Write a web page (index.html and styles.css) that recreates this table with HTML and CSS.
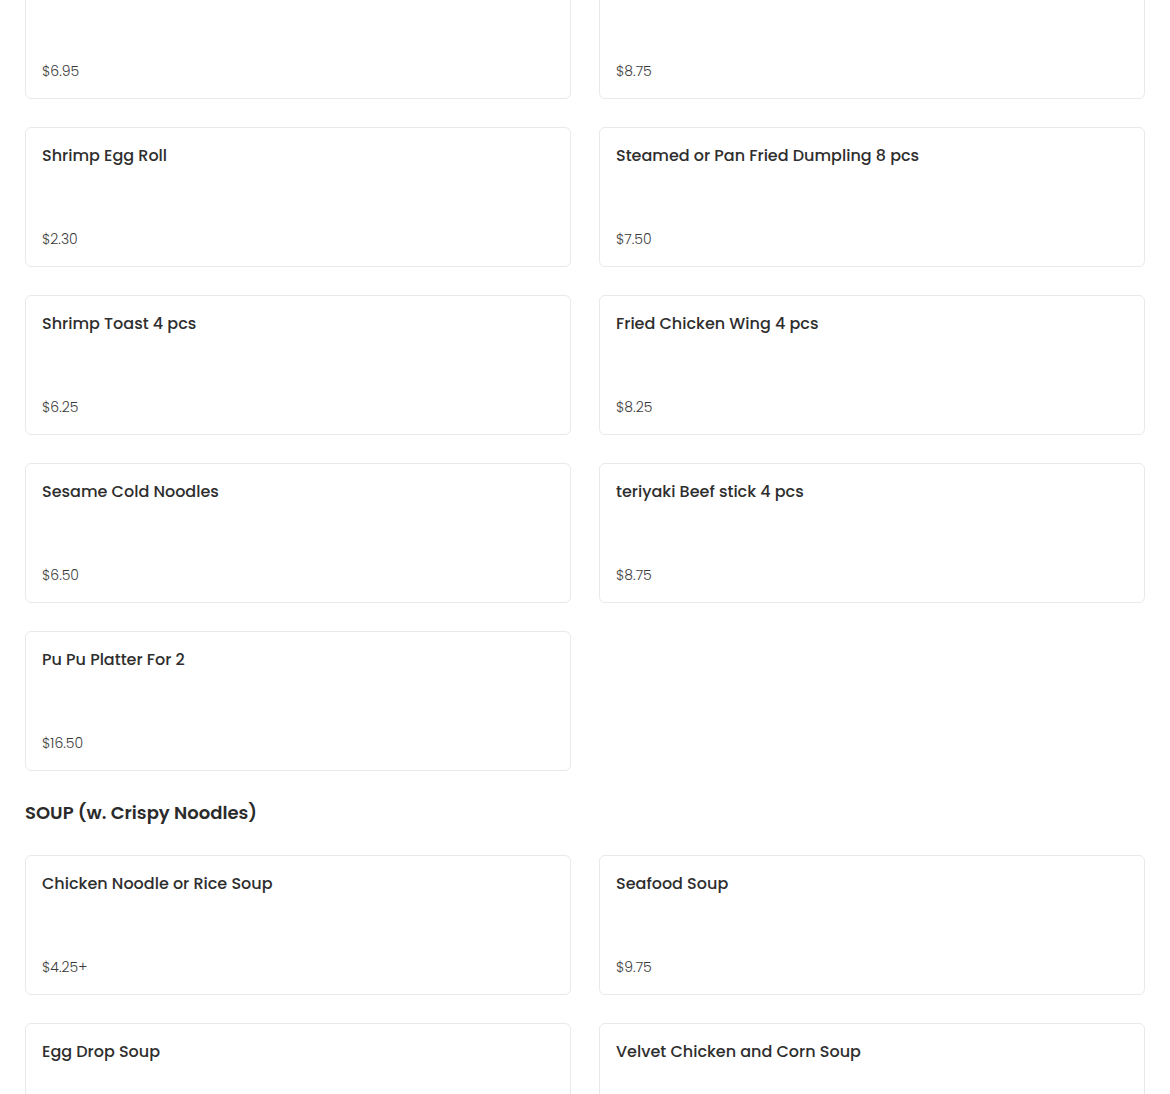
FILE: index.html
```html
<!DOCTYPE html>
<html>
<head>
<meta charset="utf-8">
<link rel="stylesheet" href="styles.css">
</head>
<body>
<main class="menu">
  <section class="grid first">
    <div class="card"><div class="name">&nbsp;</div><div class="price">$6.95</div></div>
    <div class="card"><div class="name">&nbsp;</div><div class="price">$8.75</div></div>
    <div class="card"><div class="name">Shrimp Egg Roll</div><div class="price">$2.30</div></div>
    <div class="card"><div class="name">Steamed or Pan Fried Dumpling 8 pcs</div><div class="price">$7.50</div></div>
    <div class="card"><div class="name">Shrimp Toast 4 pcs</div><div class="price">$6.25</div></div>
    <div class="card"><div class="name">Fried Chicken Wing 4 pcs</div><div class="price">$8.25</div></div>
    <div class="card"><div class="name">Sesame Cold Noodles</div><div class="price">$6.50</div></div>
    <div class="card"><div class="name">teriyaki Beef stick 4 pcs</div><div class="price">$8.75</div></div>
    <div class="card"><div class="name">Pu Pu Platter For 2</div><div class="price">$16.50</div></div>
  </section>
  <h2 class="section-title">SOUP (w. Crispy Noodles)</h2>
  <section class="grid">
    <div class="card"><div class="name">Chicken Noodle or Rice Soup</div><div class="price">$4.25+</div></div>
    <div class="card"><div class="name">Seafood Soup</div><div class="price">$9.75</div></div>
    <div class="card"><div class="name">Egg Drop Soup</div><div class="price">&nbsp;</div></div>
    <div class="card"><div class="name">Velvet Chicken and Corn Soup</div><div class="price">&nbsp;</div></div>
  </section>
</main>
</body>
</html>
```
FILE: styles.css
```css
html, body {
  margin: 0;
  padding: 0;
  background: #ffffff;
  overflow: hidden;
}
body {
  font-family: Poppins, "Open Sans", "Noto Sans", sans-serif;
  color: #2b2b2b;
}
.menu {
  padding: 0 25px;
}
.grid {
  display: grid;
  grid-template-columns: 1fr 1fr;
  gap: 28px;
}
.grid.first {
  margin-top: -41px;
}
.card {
  box-sizing: border-box;
  height: 140px;
  border: 1px solid #e9e9e9;
  border-radius: 6px;
  padding: 16px;
  display: flex;
  flex-direction: column;
  justify-content: space-between;
  background: #fff;
}
.name {
  font-size: 16px;
  font-weight: 500;
  line-height: 24px;
  color: #2e2e2e;
}
.price {
  font-size: 14px;
  font-weight: 300;
  line-height: 21px;
  color: #3a3a3a;
}
.section-title {
  margin: 29px 0 29px;
  font-size: 18px;
  font-weight: 600;
  line-height: 26px;
  color: #2b2b2b;
}
```
